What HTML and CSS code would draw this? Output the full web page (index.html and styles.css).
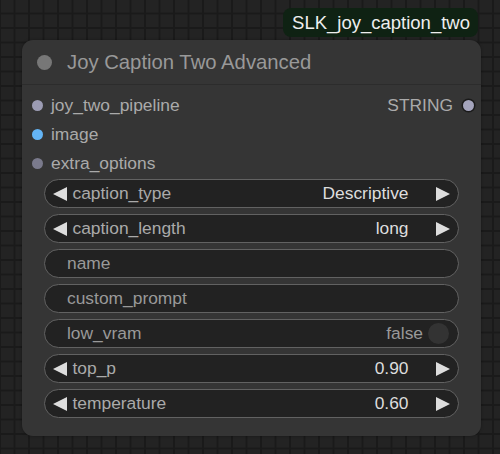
FILE: index.html
```html
<!DOCTYPE html>
<html>
<head>
<meta charset="utf-8">
<link rel="stylesheet" href="styles.css">
</head>
<body>
<div class="canvas">
  <div class="node-wrap">
    <div class="badge">SLK_joy_caption_two</div>
    <div class="node">
      <div class="title">
        <span class="title-dot"></span>
        <span class="title-text">Joy Caption Two Advanced</span>
      </div>
      <div class="slots">
        <div class="slot-row">
          <div class="slot-in"><span class="dot dot-pipe"></span>joy_two_pipeline</div>
          <div class="slot-out">STRING<span class="dot dot-out"></span></div>
        </div>
        <div class="slot-row">
          <div class="slot-in"><span class="dot dot-image"></span>image</div>
        </div>
        <div class="slot-row">
          <div class="slot-in"><span class="dot dot-extra"></span>extra_options</div>
        </div>
      </div>
      <div class="widgets">
        <div class="widget combo">
          <span class="arrow arrow-left"></span>
          <span class="w-label">caption_type</span>
          <span class="w-value">Descriptive</span>
          <span class="arrow arrow-right"></span>
        </div>
        <div class="widget combo">
          <span class="arrow arrow-left"></span>
          <span class="w-label">caption_length</span>
          <span class="w-value">long</span>
          <span class="arrow arrow-right"></span>
        </div>
        <div class="widget text">
          <span class="w-label dim">name</span>
        </div>
        <div class="widget text">
          <span class="w-label dim">custom_prompt</span>
        </div>
        <div class="widget toggle">
          <span class="w-label dim">low_vram</span>
          <span class="t-value">false</span>
          <span class="knob"></span>
        </div>
        <div class="widget combo">
          <span class="arrow arrow-left"></span>
          <span class="w-label">top_p</span>
          <span class="w-value">0.90</span>
          <span class="arrow arrow-right"></span>
        </div>
        <div class="widget combo">
          <span class="arrow arrow-left"></span>
          <span class="w-label">temperature</span>
          <span class="w-value">0.60</span>
          <span class="arrow arrow-right"></span>
        </div>
      </div>
    </div>
  </div>
</div>
</body>
</html>
```

FILE: styles.css
```css
* { box-sizing: border-box; }
html, body {
  margin: 0;
  padding: 0;
  width: 500px;
  height: 454px;
  overflow: hidden;
}
body {
  font-family: "Liberation Sans", Arial, sans-serif;
  background-color: #232323;
  background-image:
    linear-gradient(to right, #1a1a1a 0, #1a1a1a 1.5px, transparent 1.5px),
    linear-gradient(to bottom, #1a1a1a 0, #1a1a1a 1.5px, transparent 1.5px);
  background-size: 14.5px 14.5px;
  background-position: -1px -2px;
}
.canvas {
  width: 500px;
  height: 454px;
  padding: 8px 0 0 22px;
}
.node-wrap {
  width: 459px;
  display: flex;
  flex-direction: column;
}
.badge {
  align-self: flex-end;
  margin-right: 3px;
  margin-bottom: 3px;
  height: 29px;
  line-height: 29px;
  padding: 0 8px 0 9px;
  background: #0f2213;
  color: #eeeeee;
  font-size: 18.5px;
  border-radius: 8px;
}
.node {
  height: 396px;
  background: #353535;
  border-radius: 11px;
  box-shadow: 0 0 3px rgba(0,0,0,0.35);
  display: flex;
  flex-direction: column;
}
.title {
  height: 45px;
  border-bottom: 1px solid #2c2c2c;
  display: flex;
  align-items: center;
  padding-left: 15px;
  padding-top: 1px;
}
.title-dot {
  width: 15px;
  height: 15px;
  border-radius: 50%;
  background: #777777;
  margin-right: 15px;
}
.title-text {
  font-size: 20.3px;
  color: #999999;
}
.slots {
  padding-top: 6px;
  display: flex;
  flex-direction: column;
}
.slot-row {
  height: 29px;
  display: flex;
  align-items: center;
  justify-content: space-between;
  font-size: 17.4px;
  color: #aaaaaa;
}
.slot-in {
  display: flex;
  align-items: center;
  padding-left: 9.5px;
}
.slot-in .dot { margin-right: 8.5px; }
.slot-out {
  display: flex;
  align-items: center;
  padding-right: 7.5px;
}
.slot-out .dot { margin-left: 9.5px; }
.dot {
  width: 11px;
  height: 11px;
  border-radius: 50%;
  display: inline-block;
}
.dot-pipe { background: #9c9cb4; }
.dot-image { background: #64b5f6; }
.dot-extra { background: #7a7a8c; }
.dot-out {
  background: #a4a4bc;
  box-shadow: 0 0 0 1.5px #1a1a1a;
}
.widgets {
  margin-top: 1px;
  padding: 0 22px;
  display: flex;
  flex-direction: column;
  gap: 6px;
}
.widget {
  height: 29px;
  border: 1px solid #626262;
  border-radius: 15px;
  background: #222222;
  display: flex;
  align-items: center;
  font-size: 17.4px;
}
.combo { padding: 0 7.7px; }
.arrow {
  width: 0;
  height: 0;
  border-top: 7.25px solid transparent;
  border-bottom: 7.25px solid transparent;
}
.arrow-left {
  border-right: 14.5px solid #dddddd;
  margin-right: 5.8px;
}
.arrow-right {
  border-left: 14.5px solid #dddddd;
  margin-left: 27.8px;
}
.w-label {
  color: #aaaaaa;
  flex: 1;
}
.w-label.dim { color: #999999; }
.w-value { color: #dddddd; }
.text { padding-left: 22px; }
.toggle { padding: 0 9px 0 22px; }
.t-value { color: #999999; margin-right: 5px; }
.knob {
  width: 21px;
  height: 21px;
  border-radius: 50%;
  background: #333333;
}
```
